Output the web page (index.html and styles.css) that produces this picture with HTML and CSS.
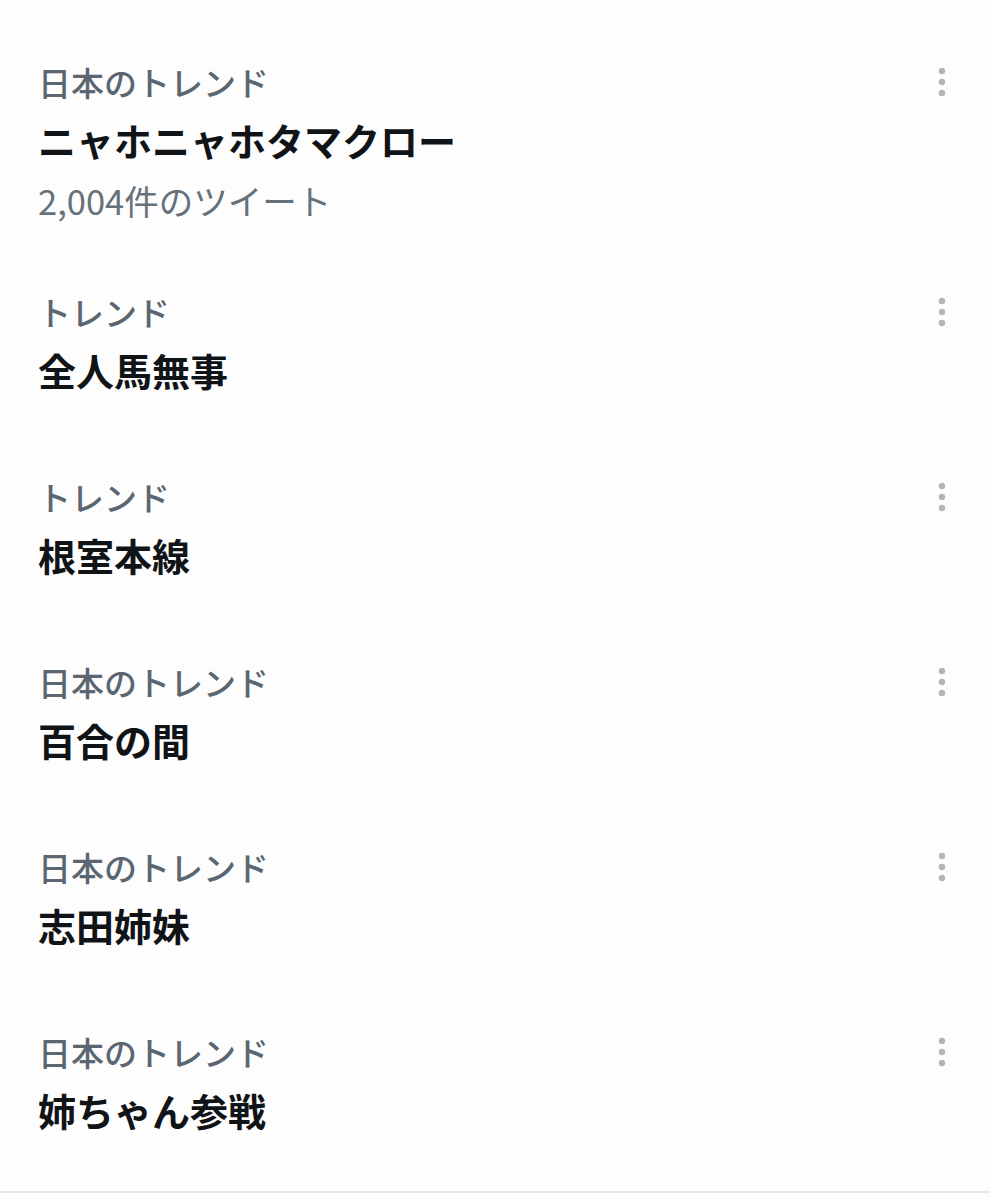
FILE: index.html
```html
<!DOCTYPE html>
<html lang="ja">
<head>
<meta charset="utf-8">
<title>トレンド</title>
<link rel="stylesheet" href="styles.css">
</head>
<body>
<main class="list">
  <section class="trend first">
    <div class="body">
      <div class="label">日本のトレンド</div>
      <div class="title">ニャホニャホタマクロー</div>
      <div class="count">2,004件のツイート</div>
    </div>
    <div class="more"><svg viewBox="0 0 24 36" width="24" height="36"><circle cx="12" cy="7" r="3.2"/><circle cx="12" cy="18" r="3.2"/><circle cx="12" cy="29" r="3.2"/></svg></div>
  </section>
  <section class="trend">
    <div class="body">
      <div class="label">トレンド</div>
      <div class="title">全人馬無事</div>
    </div>
    <div class="more"><svg viewBox="0 0 24 36" width="24" height="36"><circle cx="12" cy="7" r="3.2"/><circle cx="12" cy="18" r="3.2"/><circle cx="12" cy="29" r="3.2"/></svg></div>
  </section>
  <section class="trend">
    <div class="body">
      <div class="label">トレンド</div>
      <div class="title">根室本線</div>
    </div>
    <div class="more"><svg viewBox="0 0 24 36" width="24" height="36"><circle cx="12" cy="7" r="3.2"/><circle cx="12" cy="18" r="3.2"/><circle cx="12" cy="29" r="3.2"/></svg></div>
  </section>
  <section class="trend">
    <div class="body">
      <div class="label">日本のトレンド</div>
      <div class="title">百合の間</div>
    </div>
    <div class="more"><svg viewBox="0 0 24 36" width="24" height="36"><circle cx="12" cy="7" r="3.2"/><circle cx="12" cy="18" r="3.2"/><circle cx="12" cy="29" r="3.2"/></svg></div>
  </section>
  <section class="trend">
    <div class="body">
      <div class="label">日本のトレンド</div>
      <div class="title">志田姉妹</div>
    </div>
    <div class="more"><svg viewBox="0 0 24 36" width="24" height="36"><circle cx="12" cy="7" r="3.2"/><circle cx="12" cy="18" r="3.2"/><circle cx="12" cy="29" r="3.2"/></svg></div>
  </section>
  <section class="trend last">
    <div class="body">
      <div class="label">日本のトレンド</div>
      <div class="title">姉ちゃん参戦</div>
    </div>
    <div class="more"><svg viewBox="0 0 24 36" width="24" height="36"><circle cx="12" cy="7" r="3.2"/><circle cx="12" cy="18" r="3.2"/><circle cx="12" cy="29" r="3.2"/></svg></div>
  </section>
</main>
</body>
</html>
```

FILE: styles.css
```css
html, body {
  margin: 0;
  padding: 0;
  background: #fdfdfd;
}

body {
  font-family: "Noto Sans CJK JP", "Noto Sans", sans-serif;
  height: 1200px;
  overflow: hidden;
}

.list {
  padding-top: 38px;
}

.trend {
  display: flex;
  align-items: flex-start;
  padding: 20px 36px 57px 38px;
}

.trend.last {
  border-bottom: 2px solid #e8e8e8;
  padding-bottom: 55px;
}

.body {
  flex: 1;
  display: flex;
  flex-direction: column;
}

.label {
  font-size: 33px;
  line-height: 48px;
  font-weight: 500;
  color: #5b6671;
}

.title {
  margin-top: 8px;
  font-size: 38px;
  line-height: 52px;
  font-weight: 700;
  color: #111417;
}

.count {
  margin-top: 23px;
  font-size: 34.5px;
  line-height: 22px;
  font-weight: 400;
  color: #66717b;
}

.more {
  width: 24px;
  height: 48px;
  display: flex;
  align-items: center;
  justify-content: center;
}

.more svg {
  display: block;
  fill: #b0b6bc;
}
```
